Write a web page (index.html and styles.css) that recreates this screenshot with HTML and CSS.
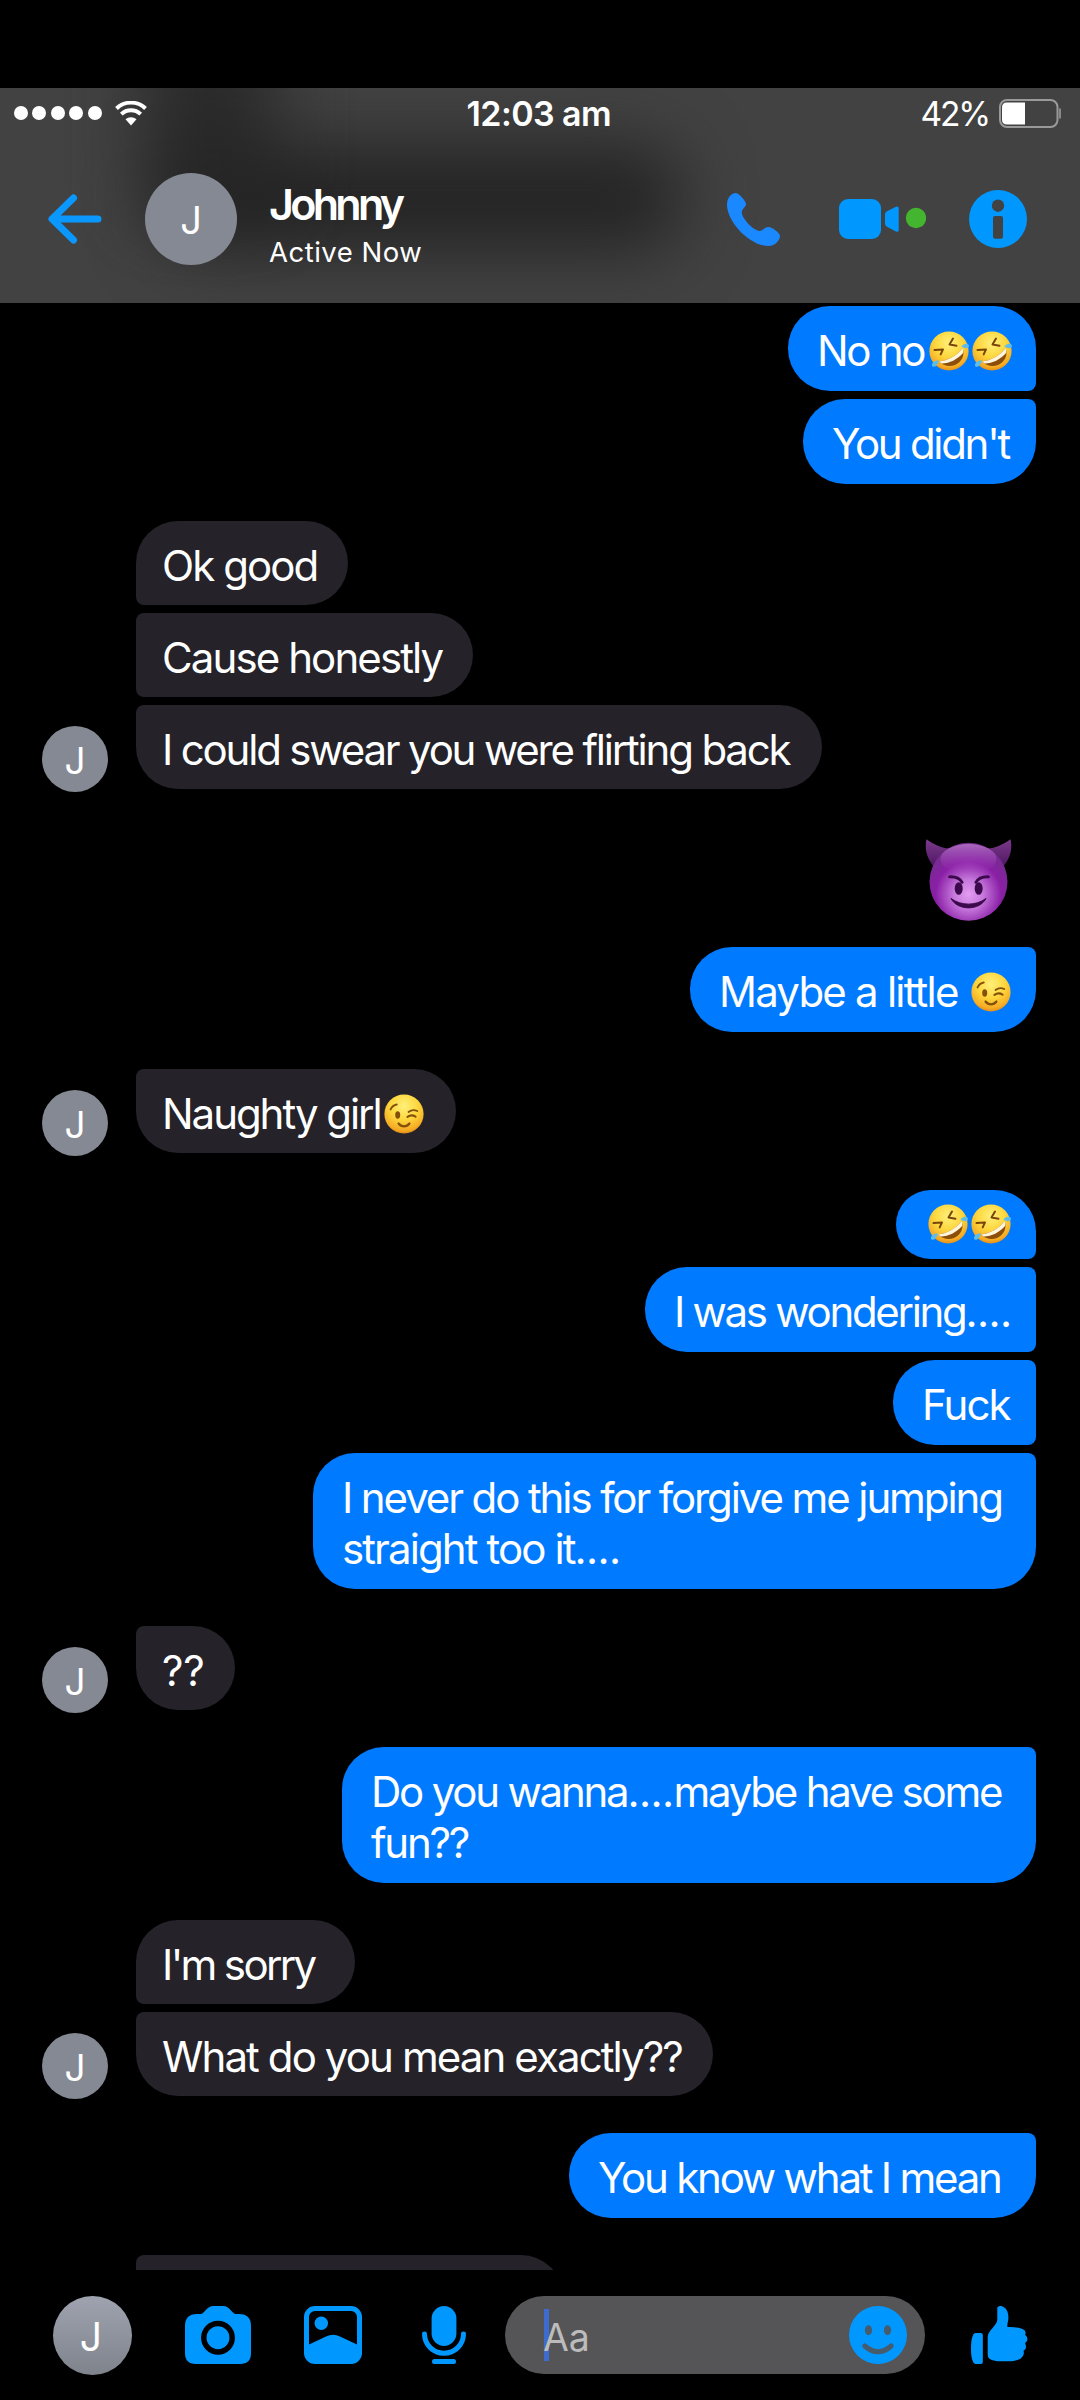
FILE: index.html
```html
<!DOCTYPE html>
<html lang="en">
<head>
<meta charset="utf-8">
<title>Johnny</title>
<link rel="stylesheet" href="styles.css">
</head>
<body>
<svg class="sprites" width="0" height="0" aria-hidden="true">
  <defs>
    <radialGradient id="gold" cx=".5" cy=".3" r=".72">
      <stop offset="0" stop-color="#fff07a"/><stop offset=".5" stop-color="#fdd63c"/><stop offset=".85" stop-color="#f6ab24"/><stop offset="1" stop-color="#dc8715"/>
    </radialGradient>
    <radialGradient id="violet" cx=".5" cy=".66" r=".62">
      <stop offset="0" stop-color="#e29cf0"/><stop offset=".3" stop-color="#c678dc"/><stop offset=".68" stop-color="#8a1fa6"/><stop offset="1" stop-color="#742d8e"/>
    </radialGradient>
    <linearGradient id="sheen" x1="0" y1="0" x2="0" y2="1">
      <stop offset="0" stop-color="#b573c6" stop-opacity=".85"/><stop offset="1" stop-color="#9c2fb8" stop-opacity="0"/>
    </linearGradient>
    <linearGradient id="horn" x1="0" y1="0" x2="0" y2="1">
      <stop offset="0" stop-color="#7c3a8c"/><stop offset="1" stop-color="#4b1560"/>
    </linearGradient>
  </defs>
  <symbol id="rofl" viewBox="0 0 40 40">
    <circle cx="20" cy="20" r="19.6" fill="url(#gold)"/>
    <path d="M5.500 19l8.500-.6-2.300 5M24 7.500l-3.500 6 7 1.200" fill="none" stroke="#7a4508" stroke-width="2" stroke-linecap="round" stroke-linejoin="round"/>
    <path d="M10 30.500C18 30 29 24 33.500 17c3 7-1 14.500-7.500 17-5.500 2-12 .8-16-3.500z" fill="#8c4f0b"/>
    <path d="M10 30.500C18 30 29 24 33.500 17c.8 1.800.9 3.500.6 5C28.500 28.500 20 32.700 12.500 32.500z" fill="#fff5dc"/>
    <path d="M32.500 15.500c2-3 6-3.700 7.300-1.300 1 2.300-3 4.600-7.300 1.300z" fill="#5dbdea"/>
    <path d="M10 29.500c-3.800-.7-7.500 2-7 5 .7 2.500 5 2 7-5z" fill="#5dbdea"/>
  </symbol>
  <symbol id="wink" viewBox="0 0 40 40">
    <circle cx="20" cy="20" r="19.600" fill="url(#gold)"/>
    <g fill="none" stroke="#85500c" stroke-width="1.800" stroke-linecap="round">
      <path d="M6.500 15.500c1.200-2.600 3.500-4.500 6.300-5"/>
      <path d="M24.500 18c2.500-2 5.800-2.500 8.800-1"/>
      <path d="M23.500 22.800c2.500-1.700 5.500-1.800 8-.2" stroke-width="2.200"/>
      <path d="M14.500 29.500c3 3.800 8 3.800 11 0" stroke-width="2.200"/>
    </g>
    <ellipse cx="13.700" cy="21" rx="2.500" ry="3.700" fill="#85500c"/>
  </symbol>
  <symbol id="imp" viewBox="0 0 87 82">
    <path d="M1.500.3C-.8 10 2 20 10 29L27 10C17 9.500 8 5 1.500.3zM85.500.3C87.800 10 85 20 77 29L60 10C70 9.500 79 5 85.500.3z" fill="url(#horn)"/>
    <circle cx="43.500" cy="42.800" r="39" fill="url(#violet)"/>
    <ellipse cx="43.500" cy="20" rx="28" ry="15" fill="url(#sheen)"/>
    <path d="M24.500 37.800c5-.3 10 1.200 12.700 5.600M63.500 37.800c-5-.3-10 1.200-12.700 5.600" fill="none" stroke="#3c0a4c" stroke-width="2.800" stroke-linecap="round"/>
    <ellipse cx="33.700" cy="49.500" rx="4" ry="6.300" fill="#3c0a4c"/>
    <ellipse cx="53.700" cy="49.500" rx="4" ry="6.300" fill="#3c0a4c"/>
    <path d="M26 59.500c10 7.500 25 7.500 35 0-6.500 12.500-28.500 12.500-35 0z" fill="#3c0a4c" stroke="#3c0a4c" stroke-linejoin="round"/>
  </symbol>
</svg>

<header class="header">
  <div class="status">
    <div class="signal"><i></i><i></i><i></i><i></i><i></i></div>
    <svg class="wifi" width="32" height="25" viewBox="0 0 32 25">
      <path d="M1.500 7.500C9.500-.3 22.500-.3 30.500 7.500M6.300 13.200c5.500-5.200 13.900-5.200 19.400 0" fill="none" stroke="#fff" stroke-width="3.900"/>
      <path d="M10.500 18.300c3.200-2.900 7.800-2.900 11 0L16 24.500z" fill="#fff"/>
    </svg>
    <span class="clock">12:03 am</span>
    <span class="percent">42%</span>
    <svg class="battery" width="63" height="29" viewBox="0 0 63 29">
      <rect x="1" y="1" width="57.500" height="27" rx="7" fill="none" stroke="#9a9a9a" stroke-width="2"/>
      <path d="M8 3.500h18v22H8q-5 0-5-5v-12q0-5 5-5z" fill="#fff"/>
      <path d="M61 9.500v10" stroke="#8a8a8a" stroke-width="2"/>
    </svg>
  </div>
  <div class="nav">
    <svg class="back" width="54" height="50" viewBox="0 0 54 50"><path d="M25.500 4L4 25l21.500 21M5 25h45" fill="none" stroke="#0a98ff" stroke-width="7" stroke-linecap="round" stroke-linejoin="round"/></svg>
    <div class="avatar avatar-nav">J</div>
    <div class="who">
      <div class="name">Johnny</div>
      <div class="presence">Active Now</div>
    </div>
    <div class="actions">
      <svg width="53" height="53" viewBox="0 0 53 53"><path d="M0 12C0 4 5 0 8.600 0 12 0 19 8 19 11.300 19 14 14.800 16 14.800 19.700 15.500 26 26 37 32.700 38 36 38 37 34 41.700 34 45 34 53 40 53 43c0 4-5 10-11.300 10C22 53 0 28 0 12z" fill="#1a88ff"/></svg>
      <svg class="video" width="87" height="40" viewBox="0 0 87 40">
        <rect width="42" height="40" rx="9" fill="#0098ff"/>
        <path d="M47.500 12.500L57 7.800q2.700-1 2.700 1.500v21.600q0 2.500-2.700 1.500l-9.500-4.800q-1.500-1-1.500-3v-9q0-2 1.500-3.100z" fill="#0098ff"/>
        <circle cx="77" cy="19" r="10.200" fill="#43b52f"/>
      </svg>
      <svg class="info" width="58" height="58" viewBox="0 0 58 58"><circle cx="29" cy="29" r="29" fill="#0098ff"/><circle cx="29" cy="15.700" r="6.200" fill="#424242"/><rect x="24" y="26" width="10" height="22.700" rx="2" fill="#424242"/></svg>
    </div>
  </div>
</header>

<main class="chat">
  <section class="group out">
    <div class="bubble m-nono">No no<svg class="emoji" role="img" aria-label="🤣"><use href="#rofl"/></svg><svg class="emoji" role="img" aria-label="🤣"><use href="#rofl"/></svg></div>
    <div class="bubble m-didnt">You didn't</div>
  </section>
  <section class="group in">
    <div class="avatar">J</div>
    <div class="stack">
      <div class="bubble m-ok">Ok good</div>
      <div class="bubble m-cause">Cause honestly</div>
      <div class="bubble m-swear">I could swear you were flirting back</div>
    </div>
  </section>
  <section class="group out">
    <svg class="big-emoji" width="87" height="82" role="img" aria-label="😈"><use href="#imp"/></svg>
    <div class="bubble m-maybe">Maybe a little <svg class="emoji" role="img" aria-label="😉"><use href="#wink"/></svg></div>
  </section>
  <section class="group in">
    <div class="avatar">J</div>
    <div class="stack"><div class="bubble m-naughty">Naughty girl<svg class="emoji" role="img" aria-label="😉"><use href="#wink"/></svg></div></div>
  </section>
  <section class="group out">
    <div class="bubble emoji-only"><svg class="emoji" role="img" aria-label="🤣"><use href="#rofl"/></svg><svg class="emoji" role="img" aria-label="🤣"><use href="#rofl"/></svg></div>
    <div class="bubble m-wondering">I was wondering<span class="dots">....</span></div>
    <div class="bubble m-short">Fuck</div>
    <div class="bubble m-never">I never do this for forgive me jumping<br><span class="second">straight too it<span class="dots">....</span></span></div>
  </section>
  <section class="group in">
    <div class="avatar">J</div>
    <div class="stack"><div class="bubble m-what">??</div></div>
  </section>
  <section class="group out">
    <div class="bubble m-wanna">Do you wanna<span class="dots">....</span>maybe have some<br>fun??</div>
  </section>
  <section class="group in">
    <div class="avatar">J</div>
    <div class="stack">
      <div class="bubble m-sorry">I'm sorry</div>
      <div class="bubble m-mean">What do you mean exactly??</div>
    </div>
  </section>
  <section class="group out">
    <div class="bubble m-know">You know what I mean</div>
  </section>
  <section class="group in">
    <div class="stack"><div class="bubble m-next"></div></div>
  </section>
</main>

<footer class="composer">
  <div class="avatar avatar-me">J</div>
  <svg class="camera" width="66" height="58" viewBox="0 0 66 58">
    <path d="M12 8h3.500c4 0 6-8 13-8h9.500c7 0 9 8 13 8H54q12 0 12 12v27q0 11-11 11H11Q0 58 0 47V20Q0 8 12 8z" fill="#0098ff"/>
    <circle cx="33" cy="31.700" r="14.200" fill="#0098ff" stroke="#000" stroke-width="5.500"/>
  </svg>
  <svg class="gallery" width="58" height="58" viewBox="0 0 58 58">
    <rect x="2.500" y="2.500" width="53" height="53" rx="8.500" fill="none" stroke="#0098ff" stroke-width="5"/>
    <circle cx="17.300" cy="17.300" r="6.700" fill="#0098ff"/>
    <path d="M4 39L22 30.500q7-3.500 14 0L54 39v9q0 7-7 7H11q-7 0-7-7z" fill="#0098ff"/>
  </svg>
  <svg class="mic" width="44" height="58" viewBox="0 0 44 58">
    <rect x="9.600" width="24.800" height="40" rx="12.400" fill="#0098ff"/>
    <path d="M2.500 28a19.500 19.300 0 0 0 39 0M12.500 55.500h19" fill="none" stroke="#0098ff" stroke-width="5" stroke-linecap="round"/>
  </svg>
  <div class="field">
    <i class="caret"></i>
    <span class="hint">Aa</span>
    <svg class="smile" width="58" height="58" viewBox="0 0 58 58"><circle cx="29" cy="29" r="29" fill="#0098ff"/><ellipse cx="19.500" cy="24.300" rx="3.600" ry="5" fill="#465c6c"/><ellipse cx="38.500" cy="24.300" rx="3.600" ry="5" fill="#465c6c"/><path d="M15.800 40q13.200 11.500 26.400 0" fill="none" stroke="#465c6c" stroke-width="5" stroke-linecap="round"/></svg>
  </div>
  <svg class="thumb" width="57" height="58" viewBox="0 0 57 58">
    <path d="M5 27h4.800q2 0 2 2v27q0 2-2 2H5C1 58 0 50 0 42.500S1 27 5 27z" fill="#0098ff"/>
    <path d="M26.300 2c0-1.500 2-2 4.100-2 5 1.500 7 6 7 11.300 0 4-1.100 5.700-1.100 9.700 5-.3 9.500.2 13.100 1.300 4 1 6.500 3.700 4.600 6.500 3.200 2.300 3.200 6.300 0 8.200 1.500 3.300 1.500 6.300-1.500 7.700 1 3.300-.3 5.800-3 8C44 55.300 39 55.300 34 55.300c-5 0-17.300.7-17.300-6.300V31c0-6 9.300-12 9.600-17z" fill="#0098ff"/>
  </svg>
</footer>
</body>
</html>
```
FILE: styles.css
```css
* { box-sizing: border-box; }

body {
  margin: 0;
  width: 1080px;
  height: 2400px;
  padding-top: 88px;
  display: flex;
  flex-direction: column;
  overflow: hidden;
  background: #000;
  color: #fff;
  font-family: Inter, "Liberation Sans", sans-serif;
}

svg { display: block; flex: none; }
.sprites { position: absolute; }

/* Header */
.header {
  position: relative;
  flex: none;
  height: 215px;
  overflow: hidden;
  background: #424242;
}
.header::before,
.header::after {
  content: "";
  position: absolute;
  background: #242424;
}
.header::before { left: 160px; top: 58px; width: 520px; height: 104px; border-radius: 40px; filter: blur(34px); }
.header::after { left: 145px; top: -60px; width: 130px; height: 180px; opacity: .8; filter: blur(36px); }

.status, .nav { position: relative; z-index: 1; display: flex; align-items: center; }
.status { height: 50px; padding-left: 14px; }
.signal { display: flex; gap: 4.400px; }
.signal i { width: 14px; height: 14px; border-radius: 50%; background: #fff; }
.wifi { margin-left: 13px; }
.clock { width: 146px; margin-left: 320px; padding-top: 1px; font-size: 34px; font-weight: 600; line-height: 42px; letter-spacing: -0.6px; white-space: nowrap; }
.percent { width: 70px; margin-left: 308px; padding-top: 1px; font-size: 33.500px; line-height: 42px; letter-spacing: -2.200px; }
.battery { margin-left: 8px; }

.nav { height: 162px; padding: 0 53px 0 48px; }
.avatar {
  flex: none;
  display: flex;
  align-items: center;
  justify-content: center;
  width: 66px;
  height: 66px;
  padding-top: 2px;
  border-radius: 50%;
  background: #858993;
  font-size: 37px;
  line-height: 1;
}
.avatar-nav { width: 92px; height: 92px; margin-left: 43px; padding-top: 1px; font-size: 38px; }
.who { margin-left: 32px; padding-top: 10px; }
.name { font-size: 43px; font-weight: 600; line-height: 50px; letter-spacing: -3.700px; }
.presence { margin-top: 6px; font-size: 27.500px; line-height: 34px; letter-spacing: .5px; }
.actions { display: flex; align-items: center; margin-left: auto; }
.video { margin-left: 59px; }
.info { margin-left: 43px; }

/* Conversation */
.chat {
  flex: none;
  height: 1967px;
  padding: 3px 44px 0 0;
  display: flex;
  flex-direction: column;
  gap: 37px;
  overflow: hidden;
}
.group { flex: none; display: flex; }
.out { flex-direction: column; align-items: flex-end; gap: 8px; }
.in { align-items: flex-end; padding-left: 42px; }
.in .avatar { margin: 0 28px -3px 0; }
.stack { display: flex; flex-direction: column; align-items: flex-start; gap: 8px; }

.bubble {
  padding: 19px 0 15px 29px;
  font-size: 42px;
  line-height: 51px;
  letter-spacing: -2.050px;
  white-space: nowrap;
}
.out .bubble { min-height: 85px; border-radius: 42px 8px 8px 42px; background: #007aff; }
.out .bubble:first-child:not(:last-child) { border-top-right-radius: 42px; }
.out .bubble:last-child { border-bottom-right-radius: 42px; }
.in .bubble { height: 84px; padding-left: 26px; border-radius: 8px 42px 42px 8px; background: #252229; }
.in .bubble:first-child:not(:last-child) { border-top-left-radius: 42px; }
.in .bubble:last-child { border-bottom-left-radius: 42px; }
.dots { letter-spacing: -.6px; }

.emoji { display: inline-block; width: 40px; height: 40px; margin-right: 3px; vertical-align: -5px; }
.big-emoji { margin: 13px 24px 18px 0; }
.out .emoji-only { display: flex; width: 140px; min-height: 69px; height: 69px; padding: 14px 0 0 32px; border-radius: 35px 35px 8px 35px; }

.m-nono { width: 248px; letter-spacing: -2.300px; }
.m-nono .emoji:first-of-type { margin-left: 4.500px; }
.m-didnt { width: 233px; letter-spacing: -2.300px; }
.m-ok { width: 212px; letter-spacing: -1.950px; }
.m-cause { width: 337px; letter-spacing: -1.900px; }
.m-swear { width: 686px; letter-spacing: -2.190px; }
.m-maybe { width: 346px; letter-spacing: -1.780px; }
.m-maybe .emoji { margin-left: 3px; }
.m-naughty { width: 320px; }
.m-naughty .emoji { margin-left: 3px; }
.m-wondering { width: 391px; letter-spacing: -2.300px; }
.m-short { width: 143px; letter-spacing: -1.900px; }
.m-never { width: 723px; letter-spacing: -2.110px; }
.m-never .second { letter-spacing: -1.900px; }
.m-what { width: 99px; letter-spacing: -.2px; }
.m-wanna { width: 694px; letter-spacing: -2.220px; }
.m-sorry { width: 219px; letter-spacing: -2.650px; }
.m-mean { width: 577px; letter-spacing: -1.900px; }
.m-know { width: 467px; letter-spacing: -2.220px; }
.in .m-next { width: 427px; margin-left: 94px; }

/* Composer */
.composer { flex: none; display: flex; align-items: center; height: 130px; padding-left: 53px; }
.avatar-me { width: 79px; height: 79px; padding: 2px 3px 0 0; background: linear-gradient(#9ea3af, #7f838c); font-size: 39px; }
.camera { margin-left: 53px; }
.gallery { margin-left: 53px; }
.mic { margin-left: 60px; }
.field { position: relative; display: flex; align-items: center; width: 420px; height: 78px; margin-left: 39px; padding: 0 18px 0 38px; border-radius: 39px; background: #555557; }
.caret { position: absolute; left: 39px; top: 13px; width: 5px; height: 52px; background: #3d6bcf; }
.hint { position: relative; padding-top: 5px; color: #bcbcbc; font-size: 37.500px; line-height: 46px; }
.smile { margin-left: auto; }
.thumb { margin-left: 46px; }
```
